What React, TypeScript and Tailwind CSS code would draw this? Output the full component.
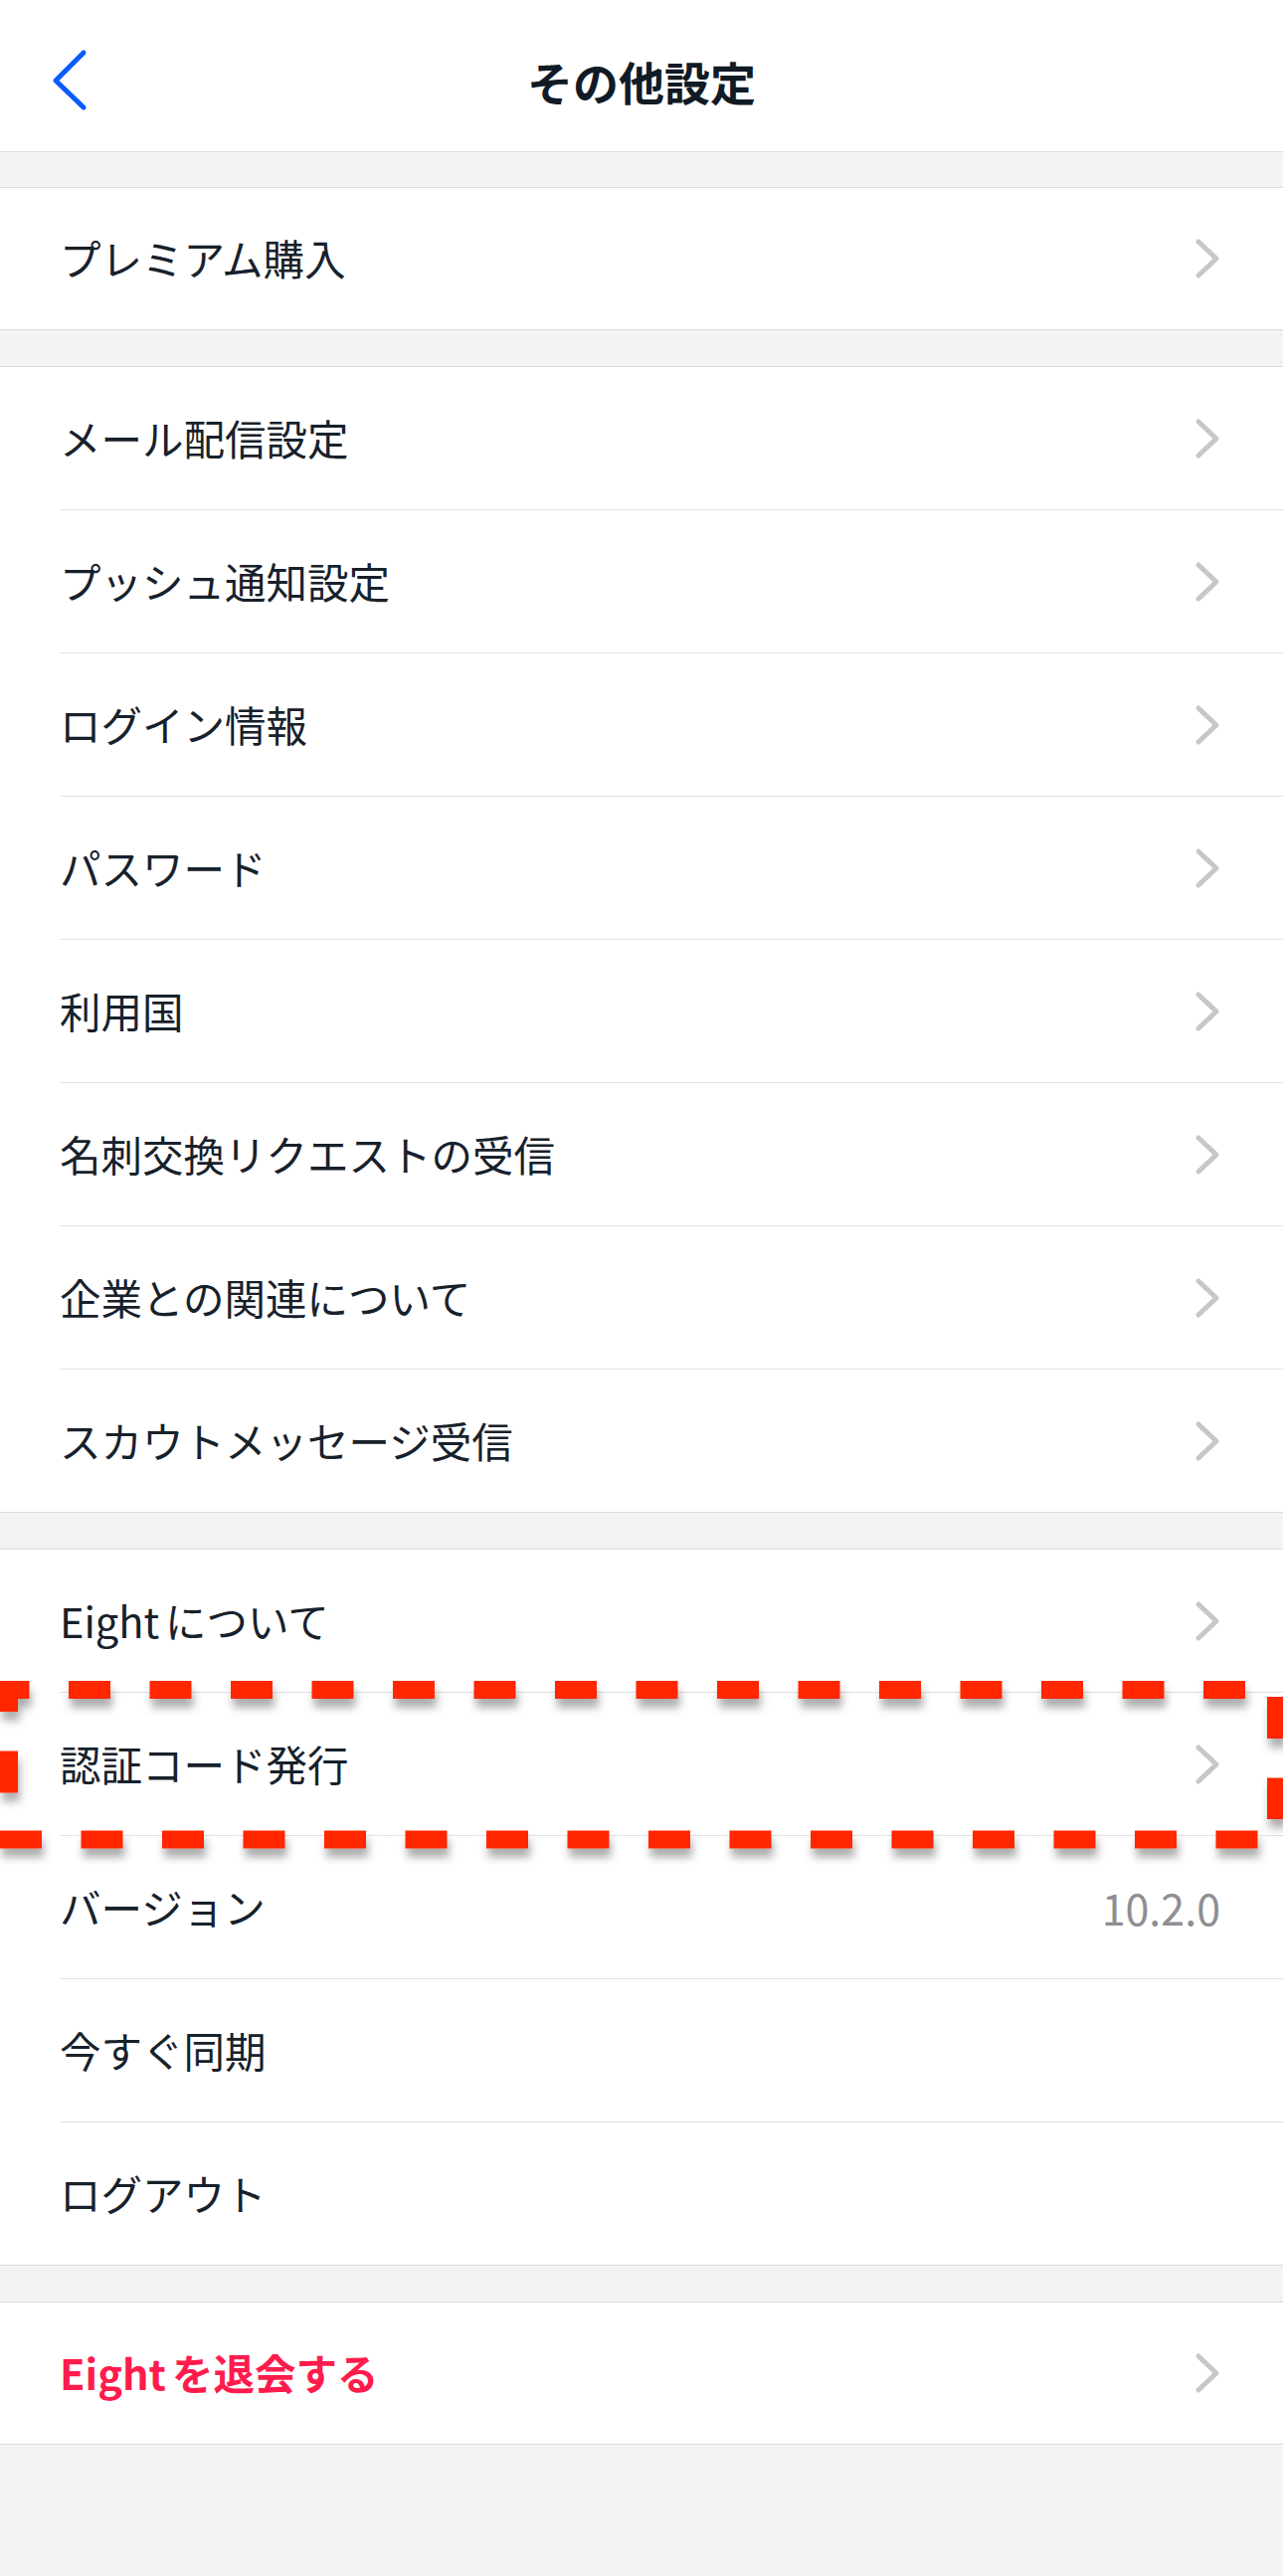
import React from "react";

const FONT = "font-['Noto_Sans_CJK_JP','Noto_Sans',sans-serif]";

function Chevron() {
  return (
    <svg width="26" height="42" viewBox="0 0 26 42" fill="none" className="shrink-0">
      <path d="M4 4 L22 21 L4 38" stroke="#c7c7cb" strokeWidth="5" strokeLinecap="round" strokeLinejoin="round" />
    </svg>
  );
}

type RowProps = {
  label: React.ReactNode;
  right?: React.ReactNode;
  chevron?: boolean;
  last?: boolean;
  red?: boolean;
  h?: string;
};

function Row({ label, right, chevron = true, last = false, red = false, h }: RowProps) {
  const height = h ?? (last ? "h-[143px]" : "h-[144px]");
  return (
    <div className={`${height} pl-[60px] bg-white`}>
      <div
        className={`flex h-full items-center justify-between pr-[63px] ${
          last ? "" : "border-b border-[#e2e2e5]"
        }`}
      >
        <span
          className={`text-[41.5px] leading-none ${
            red ? "text-[#ff1c4d] font-bold" : "text-[#17212b]"
          }`}
        >
          {label}
        </span>
        {right}
        {chevron && <Chevron />}
      </div>
    </div>
  );
}

function Section({ children }: { children: React.ReactNode }) {
  return <div className="border-y border-[#dcdcdf] bg-white">{children}</div>;
}

function DashedBox() {
  return (
    <svg
      className="absolute left-0 top-[1675px] pointer-events-none"
      width="1290"
      height="200"
      viewBox="0 0 1290 200"
      fill="none"
    >
      <defs>
        <filter id="sh" x="-10%" y="-30%" width="120%" height="160%">
          <feDropShadow dx="2" dy="9" stdDeviation="4" floodColor="#000" floodOpacity="0.32" />
        </filter>
      </defs>
      <g filter="url(#sh)" stroke="#ff2800" strokeWidth="18">
        <line x1="0" y1="24" x2="1290" y2="24" strokeDasharray="42 39.5" strokeDashoffset="12.5" />
        <line x1="0" y1="174.5" x2="1290" y2="174.5" strokeDasharray="42 39.5" />
        <line x1="9" y1="15" x2="9" y2="166" strokeDasharray="42 39.5" strokeDashoffset="11" />
        <line x1="1283" y1="31" x2="1283" y2="154" strokeDasharray="42 39.5" />
      </g>
    </svg>
  );
}

export default function App() {
  return (
    <div className={`relative min-h-[2590px] w-[1290px] bg-[#f2f3f5] ${FONT}`}>
      {/* Header */}
      <div className="grid h-[153px] grid-cols-[1fr_auto_1fr] items-center border-b border-[#dcdcdf] bg-white pt-[10px]">
        <div className="pl-[50px]">
          <svg width="40" height="64" viewBox="0 0 40 64" fill="none">
            <path d="M34 4 L6 32 L34 59" stroke="#0b5cff" strokeWidth="5" strokeLinecap="round" strokeLinejoin="round" />
          </svg>
        </div>
        <div className="text-[46px] font-bold leading-none text-[#111b26]">その他設定</div>
        <div />
      </div>

      <div className="h-[35px]" />
      <Section>
        <Row label="プレミアム購入" last h="h-[142px]" />
      </Section>

      <div className="h-[36px]" />
      <Section>
        <Row label="メール配信設定" />
        <Row label="プッシュ通知設定" />
        <Row label="ログイン情報" />
        <Row label="パスワード" />
        <Row label="利用国" />
        <Row label="名刺交換リクエストの受信" />
        <Row label="企業との関連について" />
        <Row label="スカウトメッセージ受信" last />
      </Section>

      <div className="h-[36px]" />
      <Section>
        <Row
          label={
            <>
              <span className="mr-[6px]">Eight</span>について
            </>
          }
        />
        <Row label="認証コード発行" />
        <Row
          label="バージョン"
          chevron={false}
          right={<span className="text-[43px] leading-none text-[#8e8e93]">10.2.0</span>}
        />
        <Row label="今すぐ同期" chevron={false} />
        <Row label="ログアウト" chevron={false} last />
      </Section>

      <div className="h-[36px]" />
      <Section>
        <Row
          red
          last
          h="h-[142px]"
          label={
            <>
              <span className="mr-[6px]">Eight</span>を退会する
            </>
          }
        />
      </Section>

      <DashedBox />
    </div>
  );
}
